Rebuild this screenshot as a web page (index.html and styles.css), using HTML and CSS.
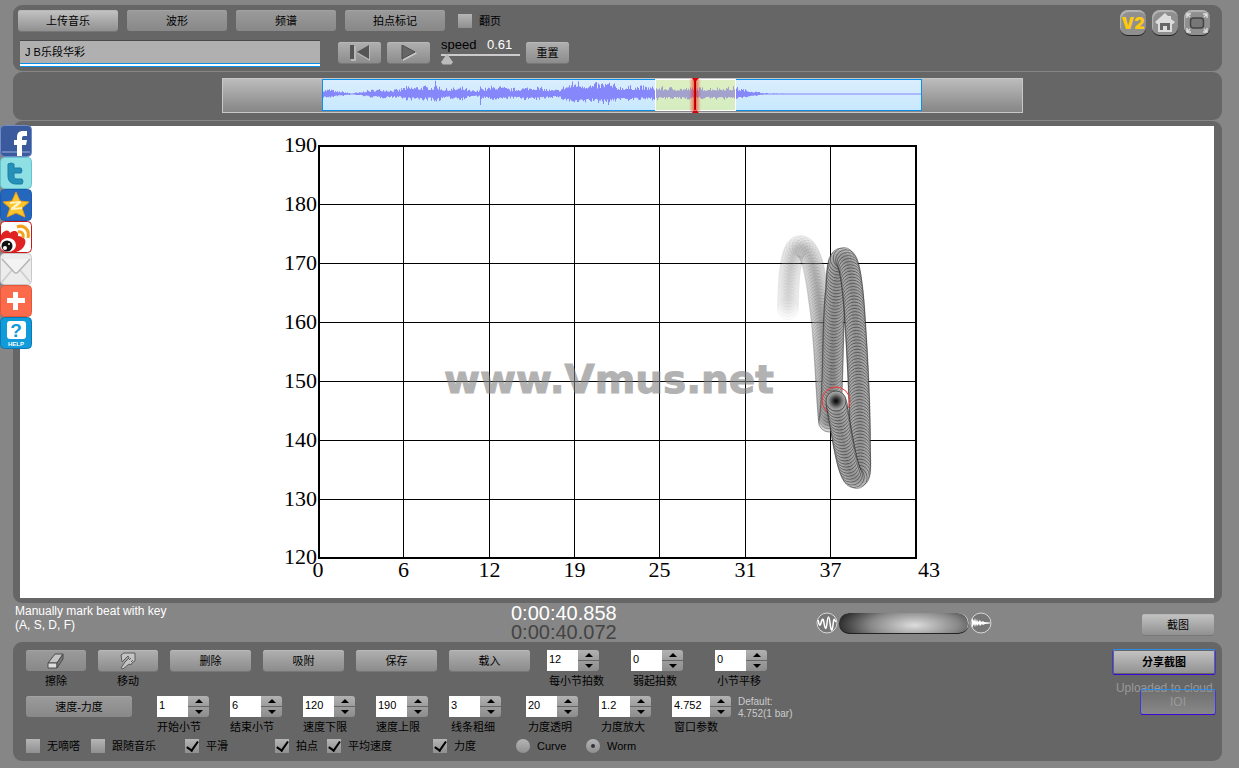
FILE: index.html
```html
<!DOCTYPE html>
<html lang="zh-CN">
<head>
<meta charset="utf-8">
<title>Vmus.net</title>
<link rel="stylesheet" href="styles.css">
</head>
<body>
<main class="app">
  <header class="panel toolbar">
    <div class="tools">
      <div class="tool-row">
        <button class="btn wide bright">上传音乐</button>
        <button class="btn wide dim">波形</button>
        <button class="btn wide dim">频谱</button>
        <button class="btn wide dim">拍点标记</button>
        <label class="option page-turn"><input type="checkbox" class="tick">翻页</label>
      </div>
      <div class="tool-row second">
        <input class="title-box" type="text" value="J B乐段华彩" aria-label="曲名">
        <div class="transport">
          <button class="btn small" aria-label="回到开头"><svg width="22" height="16" viewBox="0 0 22 16"><path d="M2 1h5v15H2z" fill="#b8b8b8"/><path d="M21 1v15L8 8.500z" fill="#b8b8b8"/><path d="M1 0h4v14H1zM20 0v14L8 7z" fill="#555"/></svg></button>
          <button class="btn small" aria-label="播放"><svg width="22" height="16" viewBox="0 0 22 16"><path d="M5 1v15l14-7.500z" fill="#c8c8c8"/><path d="M4 0v14l13-7z" fill="#666" stroke="#4a4a4a"/></svg></button>
        </div>
        <div class="speed">
          <label for="speed">speed</label><output for="speed">0.61</output>
          <input id="speed" class="speed-range" type="range" min="0" max="10" step="0.01" value="0">
        </div>
        <button class="btn small">重置</button>
      </div>
    </div>
    <nav class="badges">
      <a href="#" class="badge v2">V2</a>
      <a href="#" class="badge" aria-label="主页"><svg width="20" height="20" viewBox="0 0 20 20"><path d="M10 0 0 9l2 2h1v8h14v-8h1l2-2-4-3V3h-3z" fill="#dcdcdc"/><path d="M5 10h10v7h-3v-4H8v4H5z" fill="#666"/></svg></a>
      <a href="#" class="badge" aria-label="全屏"><svg width="22" height="20" viewBox="0 0 22 20" fill="none"><rect x="4.500" y="5" width="13" height="10" rx="3" fill="#777" stroke="#444" stroke-width="1.500"/><path d="M1 5V1h4M1 1l3 3M17 1h4v4M21 1l-3 3M1 15v4h4M1 19l3-3M17 19h4v-4M21 19l-3-3" stroke="#ddd" stroke-width="1.400"/></svg></a>
    </nav>
  </header>

  <section class="panel overview">
    <svg class="strip" viewBox="222 78 801 35" role="img" aria-label="波形概览">
      <defs>
        <linearGradient id="stripFill" x1="0" y1="0" x2="0" y2="1"><stop offset="0" stop-color="#bdbdbd"/><stop offset="1" stop-color="#858585"/></linearGradient>
        <linearGradient id="skyFill" x1="0" y1="0" x2="0" y2="1"><stop offset="0" stop-color="#daeefe"/><stop offset="1" stop-color="#c8e8fd"/></linearGradient>
        <linearGradient id="redGlow"><stop offset="0" stop-color="#f00" stop-opacity="0"/><stop offset=".5" stop-color="#f00" stop-opacity=".6"/><stop offset="1" stop-color="#f00" stop-opacity="0"/></linearGradient>
      </defs>
      <rect x="222.500" y="78.500" width="800" height="34" fill="url(#stripFill)" stroke="#c8c8c8"/>
      <rect x="322.500" y="79.500" width="599" height="31" fill="url(#skyFill)" stroke="#0a90e8"/>
      <path id="wave" fill="#8587fb"/>
      <rect x="655.500" y="79.500" width="80" height="31" fill="#e0f090" fill-opacity=".55"/>
      <path id="wave-picked" fill="#a2a2cc"/>
      <path d="M655.500 79v32M735.500 79v32M655 79.500h81M655 110.500h81" stroke="#fff"/>
      <rect x="689" y="79" width="12" height="32" fill="url(#redGlow)"/>
      <path d="M694 79h2v32h-2zM692 78h7l-3 3h-2zM692 113h7l-3-3h-2z" fill="#d80000"/>
      <path d="M695.500 81v28" stroke="#a00"/>
    </svg>
  </section>

  <section class="panel stage">
    <svg class="chart" viewBox="20 126 1194 472" role="img" aria-label="速度-力度">
      <defs>
        <radialGradient id="bead"><stop offset="0" stop-color="#222"/><stop offset=".3" stop-color="#666"/><stop offset=".7" stop-color="#a2a2a2"/><stop offset="1" stop-color="#bcbcbc"/></radialGradient>
        <radialGradient id="head"><stop offset="0" stop-color="#000"/><stop offset=".3" stop-color="#333"/><stop offset=".7" stop-color="#888"/><stop offset="1" stop-color="#b4b4b4"/></radialGradient>
      </defs>
      <g id="grid"></g>
      <text class="watermark" x="609" y="393">www.Vmus.net</text>
      <path id="track" fill="none" d="M788 309C788 285 790 246 800 246C813 246 817 285 821 315C825 350 826 390 829 423C834 390 832 320 836 290C837 268 838 258 843 258C850 258 853 290 855 320C858 365 860 410 860 445C860 462 862 478 856 478C848 478 843 440 836 401"/>
      <g id="worm"></g>
    </svg>
  </section>

  <section class="status">
    <p class="hint">Manually mark beat with key<br>(A, S, D, F)</p>
    <div class="clock"><time>0:00:40.858</time><time class="past">0:00:40.072</time></div>
    <div class="mixer">
      <svg width="22" height="22" viewBox="0 0 22 22" fill="none"><circle cx="11" cy="11" r="10" fill="#777" stroke="#d8d8d8"/><path d="M2 8c1 5 2 7 3 3s2-6 3 0 2 8 3 0 2-8 3 0 2 10 3 2 1-6 3-3" stroke="#fff" stroke-width="1.500"/></svg>
      <input class="mix-range" type="range" aria-label="混音">
      <svg width="22" height="22" viewBox="0 0 22 22"><circle cx="11" cy="11" r="10" fill="#777" stroke="#d8d8d8"/><path d="M2 6l2 3 1-3 1 4 1-3 1 3 2-2 1 2 2-1 1 1 6 .500v1l-5 .500-2 1-1-1-2 2-1-2-2 2-1-2-1 3-1-3-2 4z" fill="#fff"/></svg>
    </div>
    <button class="btn shot bright">截图</button>
  </section>

  <section class="panel controls">
    <div class="rows">
      <div class="row actions">
        <div class="field"><button class="btn tool dim" aria-labelledby="erase-l"><svg width="20" height="18" viewBox="0 0 20 18"><path d="M2 11 9 2h8l-6 9z" fill="#c4c4c4" stroke="#4c4c4c"/><path d="M2 11h9v5H2z" fill="#ddd" stroke="#4c4c4c"/><path d="M11 11l6-9v5l-6 9z" fill="#777" stroke="#4c4c4c"/></svg></button><span class="under" id="erase-l">擦除</span></div>
        <div class="field"><button class="btn tool" aria-labelledby="move-l"><svg width="20" height="18" viewBox="0 0 20 18"><path d="M4 10 3 3l3-2h11v8l-3 2-1 2-2-1-6 5-2-1 4-6 4-4-1-2-4 4z" fill="#c4c4c4" stroke="#5c5c5c"/><path d="M11 8l2-2M13 10l2-2" stroke="#5c5c5c"/></svg></button><span class="under" id="move-l">移动</span></div>
        <button class="btn mid">删除</button>
        <button class="btn mid">吸附</button>
        <button class="btn mid">保存</button>
        <button class="btn mid">载入</button>
        <div class="spinners loose">
          <div class="field"><span class="spinner"><input id="s1" value="12"><span class="steps"><button class="up" aria-label="增加"></button><button class="down" aria-label="减少"></button></span></span><label class="left" for="s1">每小节拍数</label></div>
          <div class="field"><span class="spinner"><input id="s2" value="0"><span class="steps"><button class="up" aria-label="增加"></button><button class="down" aria-label="减少"></button></span></span><label class="left" for="s2">弱起拍数</label></div>
          <div class="field"><span class="spinner"><input id="s3" value="0"><span class="steps"><button class="up" aria-label="增加"></button><button class="down" aria-label="减少"></button></span></span><label class="left" for="s3">小节平移</label></div>
        </div>
      </div>
      <div class="row params">
        <button class="btn mode dim">速度-力度</button>
        <div class="spinners">
          <div class="field"><span class="spinner"><input id="p1" value="1"><span class="steps"><button class="up" aria-label="增加"></button><button class="down" aria-label="减少"></button></span></span><label for="p1">开始小节</label></div>
          <div class="field"><span class="spinner"><input id="p2" value="6"><span class="steps"><button class="up" aria-label="增加"></button><button class="down" aria-label="减少"></button></span></span><label for="p2">结束小节</label></div>
          <div class="field"><span class="spinner"><input id="p3" value="120"><span class="steps"><button class="up" aria-label="增加"></button><button class="down" aria-label="减少"></button></span></span><label for="p3">速度下限</label></div>
          <div class="field"><span class="spinner"><input id="p4" value="190"><span class="steps"><button class="up" aria-label="增加"></button><button class="down" aria-label="减少"></button></span></span><label for="p4">速度上限</label></div>
          <div class="field"><span class="spinner"><input id="p5" value="3"><span class="steps"><button class="up" aria-label="增加"></button><button class="down" aria-label="减少"></button></span></span><label class="left" for="p5">线条粗细</label></div>
        </div>
        <div class="spinners">
          <div class="field"><span class="spinner"><input id="p6" value="20"><span class="steps"><button class="up" aria-label="增加"></button><button class="down" aria-label="减少"></button></span></span><label class="left" for="p6">力度透明</label></div>
          <div class="field"><span class="spinner"><input id="p7" value="1.2"><span class="steps"><button class="up" aria-label="增加"></button><button class="down" aria-label="减少"></button></span></span><label class="left" for="p7">力度放大</label></div>
          <div class="field"><span class="spinner long"><input id="p8" value="4.752"><span class="steps"><button class="up" aria-label="增加"></button><button class="down" aria-label="减少"></button></span></span><label class="left" for="p8">窗口参数</label></div>
        </div>
        <p class="default">Default:<br>4.752(1 bar)</p>
      </div>
      <div class="row options">
        <label class="option"><input type="checkbox" class="tick">无嘀嗒</label>
        <label class="option"><input type="checkbox" class="tick">跟随音乐</label>
        <label class="option"><input type="checkbox" class="tick" checked>平滑</label>
        <label class="option"><input type="checkbox" class="tick" checked>拍点</label>
        <label class="option"><input type="checkbox" class="tick" checked>平均速度</label>
        <label class="option"><input type="checkbox" class="tick" checked>力度</label>
        <label class="option"><input type="radio" name="view" class="dot">Curve</label>
        <label class="option"><input type="radio" name="view" class="dot" checked>Worm</label>
      </div>
    </div>
    <div class="share">
      <button class="btn framed bold bright">分享截图</button>
      <span class="note">Uploaded to cloud.</span>
      <button class="btn framed faint">IOI</button>
    </div>
  </section>
</main>

<nav class="social">
  <a href="#" aria-label="Facebook"><svg viewBox="0 0 32 32"><rect x=".5" y=".5" width="31" height="31" rx="4" fill="#3b5a9d" stroke="#6f8cc8"/><path d="M2 27h28" stroke="#6a86bd" stroke-width="2"/><path d="M17 31V20h-3v-5h3v-3c0-4 2-6 6-6h4v5h-3c-1 0-2 .5-2 2v2h5l-1 5h-4v11z" fill="#fff"/></svg></a>
  <a href="#" aria-label="Twitter"><svg viewBox="0 0 32 32"><rect x=".5" y=".5" width="31" height="31" rx="4" fill="#8fe0e4" stroke="#62c4cc"/><path d="M8 7q3-2 6 0v4h7q2 2.500 0 5h-7v3c0 2 1 3 3 3h5q2 2.500 0 5h-6c-5 0-8-3-8-8z" fill="#2590b8" stroke="#1c7da6"/></svg></a>
  <a href="#" aria-label="QQ空间"><svg viewBox="0 0 32 32"><rect x=".5" y=".5" width="31" height="31" rx="4" fill="#2467bd" stroke="#1d5aad"/><path d="M16 3l4 9 9 1-7 6 3 9-9-4-9 4 3-9-7-6 9-1z" fill="#fdc52c" stroke="#e89b18"/><path d="M10 13l11-1v2l-6 5 7-1v2l-11 1v-2l6-5-7 1z" fill="#fff3c4"/></svg></a>
  <a href="#" aria-label="微博"><svg viewBox="0 0 32 32"><rect x=".5" y=".5" width="31" height="31" rx="4" fill="#fff" stroke="#c81818"/><path d="M1 14c4-6 8-5 9-2 5-4 9-1 8 3 4 0 9 3 7 8-1 4-5 7-9 8H3l-2-3z" fill="#e02222"/><ellipse cx="8" cy="24" rx="8" ry="7" fill="#fff"/><circle cx="7" cy="25" r="5.500" fill="#111"/><circle cx="5" cy="27" r="2" fill="#fff"/><circle cx="9" cy="23" r="1" fill="#fff"/><path d="M17 6c7-3 13 3 11 11M18 11c4-1 6 2 5 6" fill="none" stroke="#f5a21b" stroke-width="3"/></svg></a>
  <a href="#" aria-label="邮件"><svg viewBox="0 0 32 32"><rect x=".5" y=".5" width="31" height="31" rx="4" fill="#ececec" stroke="#c8c8c8"/><path d="M2 29l10-12M30 29L20 17" stroke="#ccc" stroke-width="1.500"/><path d="M2 6l12 13q2 2 4 0L30 6" fill="#f3f3f3" stroke="#b5b5b5" stroke-width="1.500"/></svg></a>
  <a href="#" aria-label="更多"><svg viewBox="0 0 32 32"><rect x=".5" y=".5" width="31" height="31" rx="4" fill="#fb6b4b" stroke="#e2573a"/><path d="M13 7h5v6h7v5h-7v7h-5v-7H7v-5h6z" fill="#fff"/></svg></a>
  <a href="#" aria-label="帮助"><svg viewBox="0 0 32 32"><rect x=".5" y=".5" width="31" height="31" rx="4" fill="#119bd8" stroke="#0878b8"/><rect x="7" y="4" width="19" height="18" rx="3" fill="#fff"/><text x="16" y="20" class="help-mark">?</text><text x="16" y="29" class="help-word">HELP</text></svg></a>
</nav>
<script src="app.js"></script>
</body>
</html>
```
FILE: styles.css
```css
* { box-sizing: border-box; }
body {
  margin: 0;
  background: #868686;
  color: #000;
  font: 11px/14px "Liberation Sans", "Noto Sans CJK SC", sans-serif;
}
p { margin: 0; }
button, input { font: inherit; color: inherit; margin: 0; padding: 0; }
svg { display: block; }

.app {
  display: flex;
  flex-direction: column;
  gap: 1px;
  padding: 5px 17px 7px 13px;
}
.panel { background: #666; border-radius: 9px; }

.btn {
  flex: none;
  display: flex;
  align-items: center;
  justify-content: center;
  height: 21px;
  border: 0;
  border-radius: 3px;
  background: linear-gradient(#b0b0b0, #8c8c8c);
  box-shadow: inset 0 1px #b8b8b8, 0 1px #777;
}
.bright { background: linear-gradient(#c4c4c4, #909090); }
.dim { background: linear-gradient(#9b9b9b, #888); box-shadow: inset 0 1px #a2a2a2; }
.wide { width: 100px; }
.small { width: 43px; }
.mid { width: 81px; }
.tool { width: 60px; }
.mode { width: 106px; }
.bold { font-weight: bold; }

.toolbar { display: flex; justify-content: space-between; padding: 5px 12px 4px 5px; }
.tools { display: flex; flex-direction: column; gap: 9px; }
.tool-row { display: flex; gap: 9px; align-items: center; }
.second { gap: 6px; padding-left: 2px; align-items: flex-start; }
.second .small { margin-top: 2px; }
.page-turn { margin-left: 4px; }
.title-box {
  width: 300px;
  height: 27px;
  margin-right: 12px;
  padding: 0 5px 6px;
  border: 0;
  border-top: 1px solid #4a4a4a;
  background: #b0b0b0;
  box-shadow: inset 0 -1px #0a90e8, inset 0 -3px #fff, inset 0 -4px #0a90e8;
}
.transport { display: flex; gap: 6px; }
.speed {
  display: grid;
  grid-template-columns: 46px auto;
  grid-template-rows: 13px 12px;
  width: 79px;
  margin: 0 0 0 5px;
  font-size: 13px;
  line-height: 10px;
}
.speed output { color: #fff; }
.speed-range {
  grid-column: 1 / 3;
  appearance: none;
  width: 79px;
  height: 12px;
  background: linear-gradient(#ccc, #ccc) 0 1px / 100% 2px no-repeat;
}
.speed-range::-webkit-slider-thumb {
  appearance: none;
  width: 12px;
  height: 11px;
  background: #bbb;
  clip-path: polygon(50% 0, 100% 80%, 85% 100%, 15% 100%, 0 80%);
}
.badges { display: flex; gap: 6px; }
.badge {
  display: flex;
  align-items: center;
  justify-content: center;
  width: 26px;
  height: 25px;
  border-radius: 8px;
  background: #8f8f8f;
  box-shadow: inset 1px 2px 1px #b4b4b4, 0 1px #222;
}
.v2 { color: #ffc90e; font: 900 16px/20px "Inter", sans-serif; text-decoration: none; }

.overview { display: flex; justify-content: center; padding: 6px 0 7px 10px; }
.strip { width: 801px; height: 35px; }

.stage { padding: 5px 8px 5px 7px; }
.chart { width: 100%; height: 472px; background: #fff; }
.chart .thin { stroke: #000; stroke-width: 1; }
.chart .frame { fill: none; stroke: #000; stroke-width: 2; }
.chart .tick-y, .chart .tick-x { font: 22px "Liberation Serif", serif; }
.chart .tick-y { text-anchor: end; }
.chart .tick-x { text-anchor: middle; }
.watermark {
  font: bold 39px "DejaVu Sans", sans-serif;
  fill: #808080;
  stroke: #808080;
  stroke-width: 1;
  opacity: .6;
  text-anchor: middle;
}
.halo { fill: none; stroke: #f33; stroke-width: 1; }
.bead { fill: url(#bead); stroke: #333; stroke-width: 1; }
.head { fill: url(#head); stroke: #555; stroke-width: 1; }

.status {
  display: grid;
  grid-template-columns: 498fr 305fr 326fr auto;
  height: 37px;
  padding-right: 8px;
}
.hint { padding-left: 2px; color: #fff; font-size: 12px; line-height: 14px; }
.clock { color: #fff; font-size: 20px; line-height: 19px; }
.clock time { display: block; }
.clock .past { color: #444; }
.mixer { display: flex; gap: 1px; align-items: center; }
.mix-range {
  appearance: none;
  width: 130px;
  height: 21px;
  border-radius: 11px;
  background: radial-gradient(ellipse 80px 26px at 58% 58%, #ddd, #888 55%, #222);
  box-shadow: inset 0 -1px #222, inset -1px 0 #ccc;
}
.mix-range::-webkit-slider-thumb { appearance: none; width: 1px; height: 1px; }
.shot { width: 72px; margin-top: 10px; }

.controls { display: flex; justify-content: space-between; padding: 7px 6px 8px 13px; }
.rows { display: flex; flex-direction: column; gap: 7px; padding-top: 1px; }
.row { display: flex; align-items: flex-start; }
.actions { gap: 12px; height: 39px; }
.params { height: 36px; gap: 25px; }
.field { display: flex; flex-direction: column; gap: 2px; }
.field .btn { margin-bottom: 1px; }
.under { align-self: center; }
.left { padding-left: 2px; }
.field label, .under { white-space: nowrap; }
.spinners { display: flex; gap: 21px; }
.loose { gap: 32px; padding-left: 5px; }
.loose .field { width: 52px; }
.spinner { display: flex; width: 52px; height: 22px; }
.long { width: 59px; }
.spinner input {
  flex: 1;
  min-width: 0;
  height: 21px;
  padding: 0 2px 3px;
  border: 0;
  background: #fff;
}
.steps { display: flex; flex-direction: column; gap: 1px; width: 21px; height: 21px; }
.steps button {
  display: flex;
  align-items: center;
  justify-content: center;
  height: 10px;
  border: 0;
}
.steps .up { border-radius: 0 3px 0 0; background: linear-gradient(#b2b2b2, #9d9d9d); }
.steps .down { border-radius: 0 0 3px 0; background: linear-gradient(#9d9d9d, #8d8d8d); }
.steps button::before { content: ""; border: 4px solid transparent; }
.steps .up::before { border-top: 0; border-bottom-color: #000; }
.steps .down::before { border-bottom: 0; border-top-color: #000; }
.default { margin-left: -18px; color: #ccc; font-size: 10px; line-height: 12px; }

.options { display: grid; grid-template-columns: 65px 94px 90px 52px 106px 83px 70px auto; }
.option { display: flex; align-items: center; gap: 7px; height: 14px; white-space: nowrap; }
.tick, .dot {
  appearance: none;
  display: grid;
  place-items: center;
  width: 14px;
  height: 14px;
  background: linear-gradient(#b5b5b5, #8f8f8f);
}
.tick:checked::before {
  content: "";
  width: 5px;
  height: 10px;
  margin-bottom: 4px;
  border: solid #000;
  border-width: 0 2px 2px 0;
  transform: rotate(35deg);
}
.dot { border-radius: 50%; }
.dot:checked::before { content: ""; width: 4px; height: 4px; border-radius: 50%; background: #333; }

.share { display: flex; flex-direction: column; align-items: flex-end; }
.framed {
  width: 104px;
  height: 26px;
  border: 1px solid;
  border-color: #2f8be8 #3a3ae0 #3a08d8;
  box-shadow: inset 0 0 0 1px #666;
}
.note { margin-top: 6px; color: #999; font-size: 12px; line-height: 14px; }
.faint {
  width: 76px;
  margin-top: -6px;
  color: #999;
  background: linear-gradient(#8884, #999a);
  box-shadow: none;
  font-size: 12px;
}

.social { position: absolute; left: 0; top: 125px; width: 32px; }
.social a { display: block; height: 32px; }
.help-mark { font: bold 19px "Liberation Sans", sans-serif; fill: #119bd8; text-anchor: middle; }
.help-word { font: bold 6px "Liberation Sans", sans-serif; fill: #fff; text-anchor: middle; }
```
FILE: app.js
```js
const NS = "http://www.w3.org/2000/svg";
function add(parent, name, attrs, text) {
  const el = document.createElementNS(NS, name);
  for (const key in attrs) el.setAttribute(key, attrs[key]);
  if (text !== undefined) el.textContent = text;
  parent.appendChild(el);
  return el;
}

// Axes
const grid = document.getElementById("grid");
const columns = [[318, 0], [403.5, 6], [489.5, 12], [574.5, 19], [659.5, 25], [745.5, 31], [830.5, 37], [929, 43]];
const lines = [[146, 190], [204.5, 180], [263.5, 170], [322.5, 160], [381.5, 150], [440.5, 140], [499.5, 130], [558, 120]];
columns.forEach(([x, label], i) => {
  if (i > 0 && i < 7) add(grid, "line", { x1: x, x2: x, y1: 146, y2: 558, class: "thin" });
  add(grid, "text", { x, y: 577, class: "tick-x" }, label);
});
lines.forEach(([y, label], i) => {
  if (i > 0 && i < 7) add(grid, "line", { x1: 319, x2: 916, y1: y, y2: y, class: "thin" });
  add(grid, "text", { x: 317, y: Math.round(y) + 6, class: "tick-y" }, label);
});
add(grid, "rect", { x: 319, y: 146, width: 597, height: 412, class: "frame" });

// Worm: beads along the track, older ones fainter
const track = document.getElementById("track");
const worm = document.getElementById("worm");
const total = track.getTotalLength();
const count = 230;
for (let i = 0; i < count; i++) {
  const t = i / count;
  const p = track.getPointAtLength(total * t);
  const opacity = Math.min(0.55, 0.04 + 1.2 * Math.pow(t, 1.4));
  if (i === Math.round(count * 0.88)) add(worm, "circle", { cx: 836, cy: 401, r: 14, class: "halo" });
  add(worm, "circle", { cx: p.x.toFixed(1), cy: p.y.toFixed(1), r: 10.5, class: "bead", opacity: opacity.toFixed(3) });
}
add(worm, "circle", { cx: 836, cy: 401, r: 10, class: "head" });

// Waveform envelope: [x, half height]
const env = [[322, 5], [331, 6], [335, 3], [342, 3], [350, 1], [360, 2], [366, 4], [380, 6], [390, 5], [400, 5], [402, 8], [420, 9], [433, 9], [434, 15], [437, 10], [445, 6], [463, 8], [470, 4], [479, 4], [480, 15], [483, 6], [495, 10], [510, 6], [535, 9], [550, 5], [558, 5], [565, 10], [575, 15], [590, 11], [608, 14], [617, 9], [640, 9], [655, 8], [690, 7], [700, 7], [735, 8], [745, 5], [755, 3], [765, 1], [800, 0.5], [921, 0.5]];
let seed = 7;
const noise = () => (seed = (seed * 16807) % 2147483647) / 2147483647;
let plain = "";
let picked = "";
let k = 0;
for (let x = 323; x < 921; x++) {
  while (env[k + 1][0] < x) k++;
  const [x0, a] = env[k];
  const [x1, b] = env[k + 1];
  const h = a + (b - a) * (x - x0) / (x1 - x0);
  const up = Math.max(0.5, h * (0.45 + 0.55 * noise() ** 2));
  const down = Math.max(0.5, h * (0.4 + 0.4 * noise() ** 2));
  const bar = `M${x} ${(94 - up).toFixed(1)}h1v${(up + down).toFixed(1)}h-1z`;
  if (x > 655 && x < 735) picked += bar;
  else plain += bar;
}
document.getElementById("wave").setAttribute("d", plain);
document.getElementById("wave-picked").setAttribute("d", picked);
```
